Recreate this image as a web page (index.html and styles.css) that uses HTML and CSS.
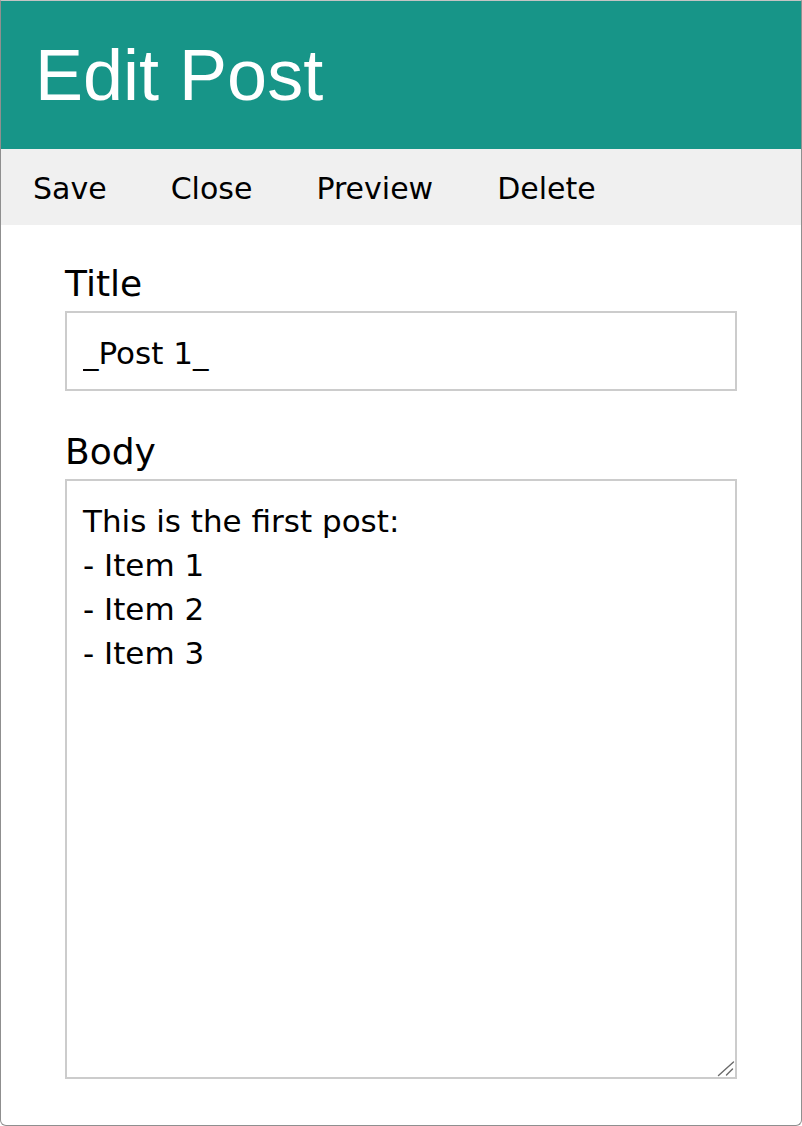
FILE: index.html
```html
<!DOCTYPE html>
<html lang="en">
<head>
<meta charset="utf-8">
<title>Edit Post</title>
<link rel="stylesheet" href="styles.css">
</head>
<body>
<div class="window">
  <header class="app-header">
    <h1 class="app-title">Edit Post</h1>
  </header>
  <nav class="toolbar">
    <a class="toolbar-link" href="#">Save</a>
    <a class="toolbar-link" href="#">Close</a>
    <a class="toolbar-link" href="#">Preview</a>
    <a class="toolbar-link" href="#">Delete</a>
  </nav>
  <form class="post-form">
    <label class="field-label" for="title">Title</label>
    <input class="field-input" id="title" type="text" value="_Post 1_">
    <label class="field-label" for="body">Body</label>
    <div class="textarea-wrap">
      <textarea class="field-textarea" id="body">This is the first post:
- Item 1
- Item 2
- Item 3</textarea>
      <svg class="resize-grip" width="20" height="20" viewBox="0 0 20 20" aria-hidden="true">
        <line x1="16.5" y1="3" x2="1.5" y2="16.5" stroke="#6a6a6a" stroke-width="1.4" stroke-linecap="round"/>
        <line x1="15.5" y1="10" x2="9.5" y2="16" stroke="#6a6a6a" stroke-width="1.4" stroke-linecap="round"/>
      </svg>
    </div>
  </form>
</div>
</body>
</html>
```

FILE: styles.css
```css
html, body {
  margin: 0;
  padding: 0;
  height: 100%;
  background: #ffffff;
}

.window {
  box-sizing: border-box;
  height: 100vh;
  display: flex;
  flex-direction: column;
  border: 1px solid #8f8f8f;
  border-top-color: #c4c4c4;
  border-radius: 0 0 6px 6px;
  overflow: hidden;
  font-family: "DejaVu Sans", Verdana, sans-serif;
  color: #000;
}

.app-header {
  background: #179588;
  height: 148px;
  box-sizing: border-box;
  padding: 0 34px;
  display: flex;
  align-items: center;
}

.app-title {
  margin: 0;
  font-family: "Liberation Sans", Arial, sans-serif;
  font-weight: normal;
  font-size: 72px;
  line-height: 1;
  color: #ffffff;
}

.toolbar {
  background: #f0f0f0;
  height: 76px;
  box-sizing: border-box;
  display: flex;
  align-items: stretch;
}

.toolbar-link {
  display: block;
  padding: 22px 32px 18px;
  font-size: 30px;
  line-height: 36px;
  color: #000;
  text-decoration: none;
}

.post-form {
  flex: 1;
  display: flex;
  flex-direction: column;
  padding: 38px 64px 46px;
}

.field-label {
  display: block;
  font-size: 36px;
  line-height: 42px;
  margin-bottom: 6px;
}

.field-input,
.field-textarea {
  box-sizing: border-box;
  width: 100%;
  margin: 0;
  border: 2px solid #cccccc;
  border-radius: 0;
  background: #fff;
  font-family: "DejaVu Sans", Verdana, sans-serif;
  font-size: 31px;
  line-height: 44px;
  color: #000;
  outline: none;
}

.field-input {
  height: 80px;
  padding: 18px 16px 14px;
  margin-bottom: 40px;
}

.textarea-wrap {
  flex: 1;
  position: relative;
  display: flex;
}

.field-textarea {
  flex: 1;
  height: 100%;
  padding: 18px 16px 14px;
  resize: none;
}

.resize-grip {
  position: absolute;
  right: 0;
  bottom: 0;
  pointer-events: none;
}
```
